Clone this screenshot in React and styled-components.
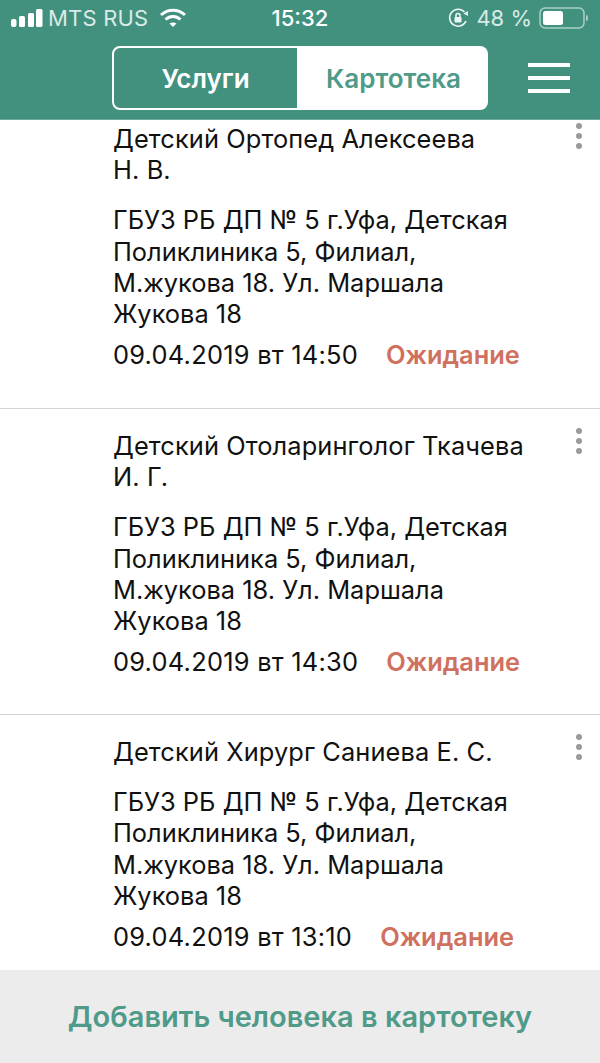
import React from 'react';
import styled, { createGlobalStyle } from 'styled-components';

const GREEN = '#42917f';

const Global = createGlobalStyle`
  html, body { margin: 0; padding: 0; background: #fff; }
  body { font-family: Inter, Roboto, "Noto Sans", sans-serif; }
`;

const Page = styled.div`
  width: 600px;
  height: 1063px;
  display: flex;
  flex-direction: column;
  overflow: hidden;
`;

const Header = styled.header`
  background: ${GREEN};
  height: 120px;
  flex-shrink: 0;
  color: #fff;
  border-bottom: 1px solid #6fa99b;
  box-sizing: border-box;
`;

const StatusBar = styled.div`
  height: 36px;
  display: grid;
  grid-template-columns: 1fr auto 1fr;
  align-items: center;
  padding: 0 11px;
  font-size: 22px;
  color: #d9ebe6;
`;

const StatusLeft = styled.div`
  display: flex;
  align-items: center;
  gap: 5px;
`;

const StatusRight = styled.div`
  display: flex;
  align-items: center;
  justify-content: flex-end;
  gap: 7px;
`;

const Carrier = styled.span`
  margin-right: 6px;
  letter-spacing: 0.2px;
`;

const Time = styled.div`
  font-weight: 500;
  font-size: 22px;
  color: #fff;
`;

const NavRow = styled.div`
  display: flex;
  align-items: center;
  padding: 10px 30px 0 112px;
`;

const Tabs = styled.div`
  display: flex;
  width: 376px;
  height: 64px;
`;

const Tab = styled.div`
  flex: ${({ $active }) => ($active ? '0 0 187px' : '1')};
  box-sizing: border-box;
  display: flex;
  align-items: center;
  justify-content: center;
  font-size: 26px;
  font-weight: 600;
  background: ${({ $active }) => ($active ? 'transparent' : '#fff')};
  color: ${({ $active }) => ($active ? '#fff' : '#4f9a88')};
  border: ${({ $active }) => ($active ? '2px solid #fff' : 'none')};
  border-radius: ${({ $active }) => ($active ? '8px 0 0 8px' : '0 8px 8px 0')};
`;

const Burger = styled.div`
  margin-left: auto;
  width: 42px;
  display: flex;
  flex-direction: column;
  gap: 9px;
`;

const BurgerLine = styled.span`
  display: block;
  height: 4px;
  background: #fff;
`;

const List = styled.div`
  flex: 1;
  min-height: 0;
`;

const Item = styled.div`
  position: relative;
  box-sizing: border-box;
  height: ${({ $h }) => $h}px;
  padding: ${({ $cut }) => ($cut ? '3px' : '21px')} 50px 0 113px;
  border-bottom: ${({ $last }) => ($last ? 'none' : '1px solid #d4d4d4')};
  font-size: 25.4px;
  line-height: 31.2px;
  color: #111;
`;

const Title = styled.div`
  margin-bottom: 19px;
  letter-spacing: 0.1px;
  white-space: nowrap;
`;

const Address = styled.div`
  margin-bottom: 10px;
  white-space: nowrap;
`;

const DateRow = styled.div`
  display: flex;
  white-space: nowrap;
  letter-spacing: 0.25px;
`;

const Status = styled.span`
  margin-left: 28px;
  color: #d0705f;
  font-weight: 600;
  letter-spacing: 0;
`;

const Dots = styled.div`
  position: absolute;
  right: 18px;
  top: ${({ $cut }) => ($cut ? '3px' : '19px')};
  display: flex;
  flex-direction: column;
  gap: 4px;
`;

const Dot = styled.span`
  width: 6px;
  height: 6px;
  border-radius: 50%;
  background: #9a9a9a;
`;

const Footer = styled.div`
  height: 93px;
  flex-shrink: 0;
  background: #ececec;
  display: flex;
  align-items: center;
  justify-content: center;
  font-size: 29px;
  font-weight: 600;
  color: #4f9a88;
`;

const ADDRESS = ['ГБУЗ РБ ДП № 5 г.Уфа, Детская', 'Поликлиника 5, Филиал,', 'М.жукова 18. Ул. Маршала', 'Жукова 18'];

const items = [
  { title: ['Детский Ортопед Алексеева', 'Н. В.'], date: '09.04.2019 вт 14:50', h: 289, cut: true },
  { title: ['Детский Отоларинголог Ткачева', 'И. Г.'], date: '09.04.2019 вт 14:30', h: 306 },
  { title: ['Детский Хирург Саниева Е. С.'], date: '09.04.2019 вт 13:10', h: 255, last: true },
];

const Lines = ({ lines }) => lines.map((l) => <div key={l}>{l}</div>);

const SignalIcon = () => (
  <svg width="32" height="18" viewBox="0 0 32 18" fill="#fff">
    <rect x="0" y="10" width="5.5" height="8" rx="2" />
    <rect x="8" y="7" width="6" height="11" rx="1.5" />
    <rect x="17" y="4" width="6" height="14" rx="1.5" />
    <rect x="25" y="0" width="6.5" height="18" rx="1.5" />
  </svg>
);

const WifiIcon = () => (
  <svg width="28" height="20" viewBox="0 0 28 20" fill="none" stroke="#fff" strokeWidth="3">
    <path d="M2 7 C9 0.5 19 0.5 26 7" />
    <path d="M6.5 11.5 C11 7.5 17 7.5 21.5 11.5" />
    <path d="M14 19 L10.5 15.5 C12.5 14 15.5 14 17.5 15.5 Z" fill="#fff" stroke="none" />
  </svg>
);

const LockIcon = () => (
  <svg width="22" height="22" viewBox="0 0 22 22" fill="none" stroke="#eef6f4" strokeWidth="1.6">
    <path d="M19 14 A8.5 8.5 0 1 1 17.5 5" />
    <path d="M16.5 6.5 L21 9 L21 4 Z" fill="#eef6f4" stroke="none" />
    <rect x="7.5" y="10" width="7" height="5.5" rx="1" fill="#eef6f4" stroke="none" />
    <path d="M9 10 V8.5 a2 2 0 0 1 4 0 V10" />
  </svg>
);

const BatteryIcon = () => (
  <svg width="50" height="22" viewBox="0 0 50 22">
    <rect x="1" y="1" width="44" height="20" rx="5" fill="none" stroke="#a9cfc6" strokeWidth="1.5" />
    <rect x="4" y="4" width="20" height="14" rx="2.5" fill="#fff" />
    <path d="M47 8 a2 3 0 0 1 0 6 Z" fill="#a9cfc6" />
  </svg>
);

const App = () => (
  <Page>
    <Global />
    <Header>
      <StatusBar>
        <StatusLeft>
          <SignalIcon />
          <Carrier>MTS RUS</Carrier>
          <WifiIcon />
        </StatusLeft>
        <Time>15:32</Time>
        <StatusRight>
          <LockIcon />
          <span>48 %</span>
          <BatteryIcon />
        </StatusRight>
      </StatusBar>
      <NavRow>
        <Tabs>
          <Tab $active>Услуги</Tab>
          <Tab>Картотека</Tab>
        </Tabs>
        <Burger>
          <BurgerLine />
          <BurgerLine />
          <BurgerLine />
        </Burger>
      </NavRow>
    </Header>
    <List>
      {items.map((it) => (
        <Item key={it.date} $h={it.h} $cut={it.cut} $last={it.last}>
          <Dots $cut={it.cut}>
            <Dot />
            <Dot />
            <Dot />
          </Dots>
          <Title>
            <Lines lines={it.title} />
          </Title>
          <Address>
            <Lines lines={ADDRESS} />
          </Address>
          <DateRow>
            {it.date}
            <Status>Ожидание</Status>
          </DateRow>
        </Item>
      ))}
    </List>
    <Footer>Добавить человека в картотеку</Footer>
  </Page>
);

export default App;
